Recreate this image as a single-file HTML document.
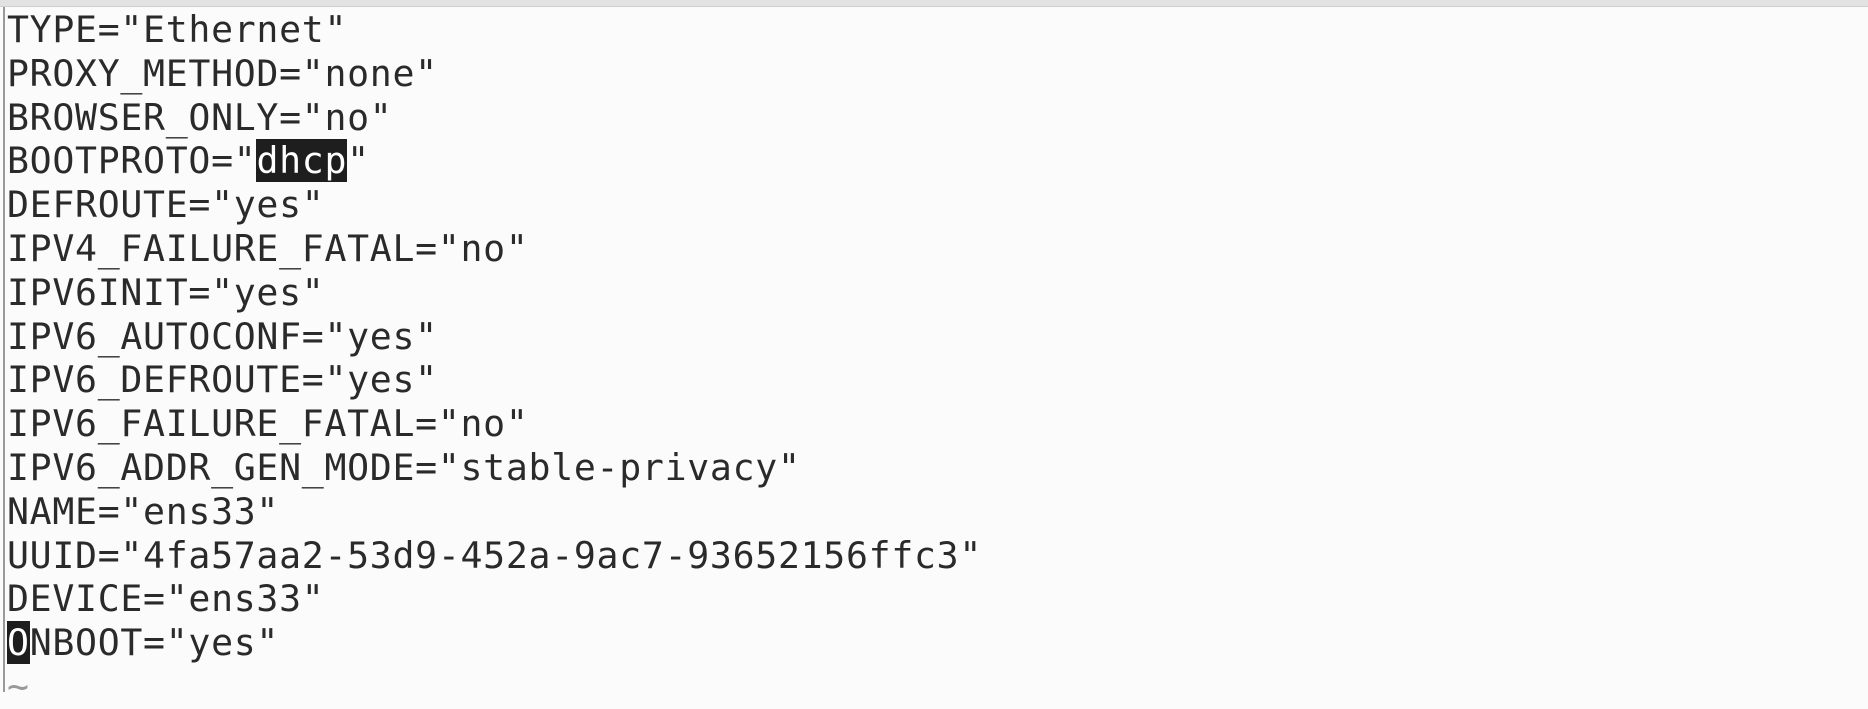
<!DOCTYPE html>
<html><head><meta charset="utf-8"><style>
html,body{margin:0;padding:0;width:1868px;height:692px;overflow:hidden;background:#fbfbfb;}
.top{position:absolute;left:0;top:0;width:1868px;height:6px;background:#e2e2e2;border-bottom:1px solid #cfcfcf;}
.left{position:absolute;left:3px;top:7px;width:2px;height:685px;background:#9a9a9a;}
pre{position:absolute;left:7px;top:8px;margin:0;font-family:"DejaVu Sans Mono","Liberation Mono",monospace;font-size:36.5px;line-height:43.8px;letter-spacing:0.7px;color:#2a2a2a;}
.hl{background:#1e1e1e;color:#fff;}
.tl{color:#999;}
</style></head><body>
<div class="top"></div><div class="left"></div>
<pre>TYPE="Ethernet"
PROXY_METHOD="none"
BROWSER_ONLY="no"
BOOTPROTO="<span class="hl">dhcp</span>"
DEFROUTE="yes"
IPV4_FAILURE_FATAL="no"
IPV6INIT="yes"
IPV6_AUTOCONF="yes"
IPV6_DEFROUTE="yes"
IPV6_FAILURE_FATAL="no"
IPV6_ADDR_GEN_MODE="stable-privacy"
NAME="ens33"
UUID="4fa57aa2-53d9-452a-9ac7-93652156ffc3"
DEVICE="ens33"
<span class="hl">O</span>NBOOT="yes"
<span class="tl">~</span></pre>
</body></html>
